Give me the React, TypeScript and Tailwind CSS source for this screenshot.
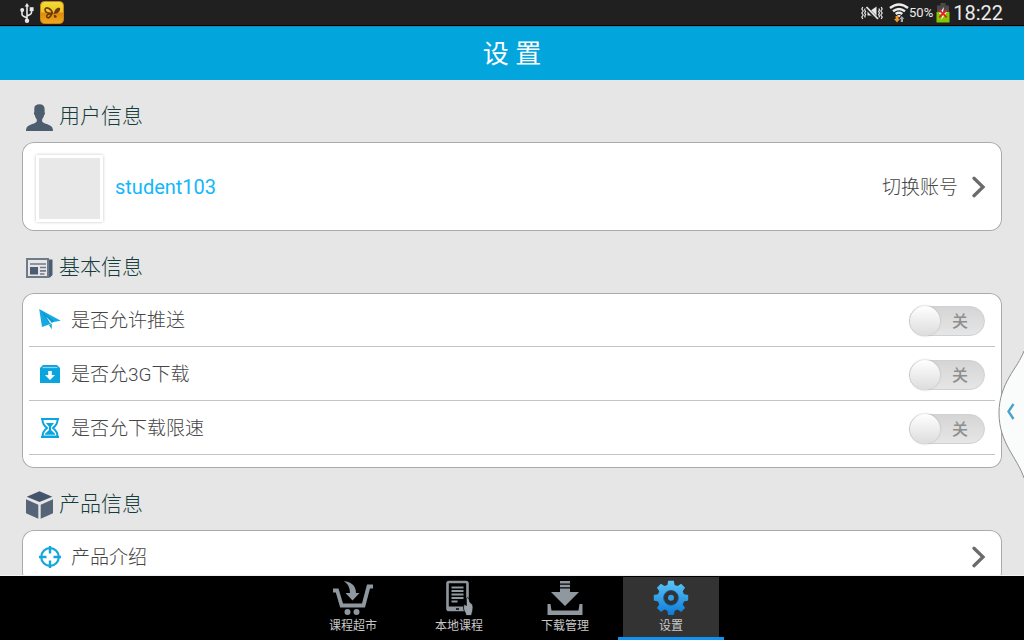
import { useState } from "react";
import type { ReactNode } from "react";

function UsbIcon() {
  return (
    <svg width="14" height="20" viewBox="0 0 14 20" fill="#e8e8e8" stroke="#e8e8e8" strokeWidth="1.6">
      <path d="M7 3v14M2 8v3.5q0 1 1.5 1.7L7 15M11.500 7v2.500q0 1.300-1.500 2L7 13" fill="none" />
      <path d="M7 0l2.300 3.500H4.700z" stroke="none" />
      <circle cx="7" cy="17.700" r="2.200" stroke="none" />
      <circle cx="2.200" cy="7" r="2" stroke="none" />
      <path d="M9.700 4.200h3.900v3.900H9.700z" stroke="none" />
    </svg>
  );
}

function ButterflyBadge() {
  return (
    <svg width="24" height="23" viewBox="0 0 24 23">
      <defs>
        <linearGradient id="gold" x1="0" y1="0" x2="0" y2="1">
          <stop offset="0" stopColor="#f2df35" />
          <stop offset="0.45" stopColor="#eec32a" />
          <stop offset="0.55" stopColor="#e08a10" />
          <stop offset="1" stopColor="#f0a91c" />
        </linearGradient>
      </defs>
      <rect x="0.500" y="0.500" width="23" height="22" rx="4" fill="url(#gold)" stroke="#c98512" />
      <g fill="none" stroke="#6b3a08" strokeWidth="1.600">
        <path d="M12.500 12.500C11.500 7.500 5.500 5 5 8.500c0 3 4 4 7.500 4zM11 13c-3.500-.5-5 1.500-4 3.300 1.500 1.500 4-.8 4.500-3.300" />
      </g>
      <path d="M14 13c0-4 3.200-7 6-6 .8 3-2.500 6-6 6zM13.800 14.200c2-.6 3.300.5 2.700 2.300-1.500 1-2.900-.3-2.700-2.300z" fill="#6b3a08" />
    </svg>
  );
}

function MuteIcon() {
  return (
    <svg width="22" height="16" viewBox="0 0 22 16" fill="none" stroke="#e8e8e8" strokeWidth="1.200">
      <path d="M1.800 2l-1 2 1.400 2-1.400 2 1.400 2-1.400 2 1 2M4.300 3.500l-.6 1.500.9 1.500-.9 1.500.9 1.500-.9 1.500.6 1.500M20.200 2l1 2-1.400 2 1.400 2-1.400 2 1.400 2-1 2M17.900 3.500l.6 1.500-.9 1.500.9 1.500-.9 1.500.9 1.500-.6 1.500" />
      <path d="M6.500 5.500h3.300L15.500 1.500v13l-5.700-4H6.500z" fill="#e8e8e8" stroke="none" />
      <path d="M5.500 3l11 11.500" stroke="#202020" strokeWidth="3.600" />
      <path d="M5.500 2l11.500 12" strokeWidth="1.800" />
    </svg>
  );
}

function WifiIcon() {
  return (
    <svg width="20" height="20" viewBox="0 0 20 20" fill="none">
      <path d="M1 5q9-7 18 0M4 8.200q6-4.600 12 0M6.700 11q3.300-2.400 6.600 0" stroke="#ededed" strokeWidth="2.400" />
      <path d="M8 12.500q2-1.200 4 0l-2 2z" fill="#ededed" />
      <path d="M6.600 13h2.800v3H11l-3 3.500L5 16h1.600z" fill="#f2952b" />
      <path d="M11.800 19v-3h-1.300l2.300-3 2.500 3H14v3z" fill="#a8a8a8" />
    </svg>
  );
}

function BatteryIcon() {
  return (
    <svg width="14" height="20" viewBox="0 0 14 20">
      <path d="M4.500 0h5v2.500H13V9H1V2.500h3.500z" fill="#4a4a4a" />
      <path d="M0.500 9h13v10.500H0.500z" fill="#83c606" />
      <path d="M8 4l-5 7h4l-2 6 6-8H7z" fill="#fff" />
      <path d="M3.300 7l7.400 7.400M10.700 7l-7.400 7.400" stroke="#e51f1f" strokeWidth="1.800" />
    </svg>
  );
}

function PersonIcon() {
  return (
    <svg width="27" height="27" viewBox="0 0 27 27" fill="#4d5d70">
      <path d="M8.300 4.200C8.500 1.400 10.500 0.300 13.500 0.300c3.300 0 5.100 1.600 5.100 4.700v3.200c.7.200.5 2-.5 3.100-.4 2.200-1.500 3.200-2 4.200v2c1.100 1.800 4 2.200 6.900 3.400 3 1.200 4 3 4 6H0c0-3 .9-4.800 4-6 2.900-1.200 5.700-1.600 6.800-3.400v-2c-.7-1-1.600-2-2-4.200-1-1.100-1.200-2.900-.5-3.100z" />
    </svg>
  );
}

function NewsIcon() {
  return (
    <svg width="27" height="20" viewBox="0 0 27 20">
      <path d="M22 1.500h4.500v15.500L24 19.500h-3z" fill="#4d5d70" />
      <rect x="1" y="1" width="21" height="18" fill="#e6e6e6" stroke="#6f7a8a" strokeWidth="2" />
      <path d="M4 9h8v7.500H4z" fill="#4d5d70" />
      <path d="M4 6h16M14 9.500h6M14 12.800h6M14 16h4.500" stroke="#6f7a8a" strokeWidth="1.700" />
    </svg>
  );
}

function CubeIcon() {
  return (
    <svg width="27" height="28" viewBox="0 0 27 28">
      <path d="M13.500 0.300L26.300 5.700 13.500 11 0.700 5.700z" fill="#44546a" />
      <path d="M0 8.300l12.300 5.400V27.700L0 22.300z" fill="#566477" />
      <path d="M27 8.300l-12.300 5.400V27.700L27 22.300z" fill="#566477" />
    </svg>
  );
}

function SendIcon() {
  return (
    <svg width="22" height="22" viewBox="0 0 22 22">
      <path d="M0.200 0L21.800 11.700l-7.300 1.300-4.500 2.500L3 18z" fill="#14a9e0" />
      <path d="M2.500 2.500L10.300 14.500l4.700-2.200z" fill="#0896cd" />
      <path d="M7 7.500l4 6.700 1.800-.7z" fill="#d9f1fa" />
      <path d="M9.800 16l3-1.200v5.400z" fill="#14a9e0" />
    </svg>
  );
}

function DownloadBoxIcon() {
  return (
    <svg width="22" height="22" viewBox="0 0 22 22">
      <path d="M1 5L4 2h14l3 3v15H1z" fill="#0aa5dd" />
      <path d="M3.500 4.500h15" stroke="#8fd5ef" strokeWidth="1.200" />
      <path d="M9.200 8h3.600v4H16l-5 5-5-5h3.200z" fill="#fff" />
    </svg>
  );
}

function HourglassIcon() {
  return (
    <svg width="22" height="22" viewBox="0 0 22 22">
      <path d="M2 2h18M2 20h18" stroke="#0aa5dd" strokeWidth="2.200" />
      <path d="M3.500 3c0 4 2 6 4.500 8-2.500 2-4.500 4.500-4.500 8.500h15c0-4-2-6.500-4.500-8.500 2.500-2 4.500-4 4.500-8" fill="none" stroke="#0aa5dd" strokeWidth="2" />
      <path d="M7 6h8l-3 3.800v3.200l4 3.700v1H6v-1l4-3.700V9.800z" fill="#0aa5dd" />
    </svg>
  );
}

function TargetIcon() {
  return (
    <svg width="22" height="22" viewBox="0 0 22 22" fill="none" stroke="#14a7de">
      <circle cx="11" cy="11" r="8.800" strokeWidth="2.200" />
      <path d="M11 0v7.500M11 14.500V22M0 11h7.500M14.500 11H22" strokeWidth="2.400" />
    </svg>
  );
}

function ChevronIcon() {
  return (
    <svg width="14" height="22" viewBox="0 0 14 22" fill="none" stroke="#6b6b6b" strokeWidth="3.300" strokeLinecap="round">
      <path d="M2 2.300l9 8.700-9 8.700" />
    </svg>
  );
}

function CartIcon() {
  return (
    <svg width="42" height="36" viewBox="0 0 42 36" fill="#8f979f">
      <path d="M1 8.500h5.500l4.500 15h19L35 4.500h6v4h-3L33 27.500H8.200L3.800 12.500H1z" />
      <circle cx="15.500" cy="32" r="3" />
      <circle cx="24.500" cy="32" r="3" />
      <path d="M11.500 1C20 2 24 6 24 13h3.500L20.500 20.500 13.500 13H18C18 8 16 3.500 11.500 1z" />
    </svg>
  );
}

function TabletIcon() {
  return (
    <svg width="30" height="36" viewBox="0 0 30 36">
      <rect x="3.500" y="2" width="20" height="28" rx="1.500" fill="none" stroke="#8f979f" strokeWidth="2.600" />
      <path d="M3 26.500h19v4.500H3z" fill="#8f979f" />
      <path d="M12 29h3" stroke="#000" strokeWidth="1.500" />
      <path d="M7.500 7.500h12M7.500 11h12M7.500 14.500h12M7.500 18h12M7.500 21.500h6" stroke="#8f979f" strokeWidth="1.800" />
      <path d="M22.300 18.500c1.200-1.500 2.400-1 2.700.5l1 3.500c2 1 3 2.500 3 5 0 3-1 5-1.500 8H22c0-3-2.500-4.500-2.500-7.500l.5-4 2.500 1.500z" fill="#9aa1a8" stroke="#000" strokeWidth="0.800" />
    </svg>
  );
}

function DownloadIcon() {
  return (
    <svg width="36" height="36" viewBox="0 0 36 36" fill="#8f979f">
      <path d="M13 1h10v2.500H13zM13 4.700h10v2.500H13zM13 8.400h10V12h9L18 26 4 12h9z" />
      <path d="M0.500 24h3l1 6.500h27l1-6.500h3v11H0.500z" />
    </svg>
  );
}

function GearIcon() {
  return (
    <svg width="36" height="36" viewBox="0 0 36 36">
      <defs>
        <linearGradient id="gear" x1="0" y1="0" x2="0" y2="1">
          <stop offset="0" stopColor="#5cc4f6" />
          <stop offset="1" stopColor="#0c7bd8" />
        </linearGradient>
      </defs>
      <path
        fill="url(#gear)"
        fillRule="evenodd"
        d="M15.200 0.800h5.600l.8 4.100 3 1.200 3.500-2.400 4 4-2.400 3.500 1.300 3 4.200.8v5.600l-4.200.8-1.300 3 2.400 3.500-4 4-3.500-2.400-3 1.300-.8 4.100h-5.600l-.8-4.100-3-1.300-3.500 2.400-4-4 2.400-3.500-1.300-3-4.200-.8V15l4.200-.8 1.300-3-2.400-3.500 4-4 3.500 2.400 3-1.200zM18 10.700a7.100 7.100 0 1 0 0 14.200 7.100 7.100 0 1 0 0-14.200z"
      />
      <circle cx="18" cy="17.800" r="7.300" fill="none" stroke="#0f3f66" strokeWidth="0.800" />
      <circle cx="18" cy="17.800" r="3" fill="#2f9fe8" />
    </svg>
  );
}

function StatusBar() {
  return (
    <div className="flex h-[26px] shrink-0 items-center justify-between border-b border-black bg-[#202020] pr-[21px] pl-5 text-[#ececec]">
      <div className="flex items-center gap-1.5">
        <UsbIcon />
        <ButterflyBadge />
      </div>
      <div className="flex items-center">
        <MuteIcon />
        <span className="pl-1.5">
          <WifiIcon />
        </span>
        <span className="pt-px text-[13px]">50%</span>
        <span className="px-[3px] pt-px">
          <BatteryIcon />
        </span>
        <time className="text-xl">18:22</time>
      </div>
    </div>
  );
}

function Section({ icon, title, children }: { icon: ReactNode; title: string; children: ReactNode }) {
  return (
    <section className="pt-3">
      <h2 className="flex h-[50px] items-center gap-1.5 pl-1 text-[21px] font-light text-[#143c3c]">
        {icon}
        {title}
      </h2>
      <div className="rounded-xl bg-white px-[7px] ring-1 ring-[#ababab] ring-inset">{children}</div>
    </section>
  );
}

function ToggleRow({ icon, label }: { icon: ReactNode; label: string }) {
  const [on, setOn] = useState(false);
  return (
    <label className="flex h-[54px] cursor-pointer items-center gap-2.5 border-b border-[#c4c4c4] px-2.5">
      {icon}
      <span className="flex-1 pt-1">{label}</span>
      <input type="checkbox" className="peer sr-only" checked={on} onChange={(e) => setOn(e.target.checked)} />
      <span
        aria-hidden="true"
        className="mt-0.5 flex h-[30px] w-[76px] items-center justify-between rounded-full border border-[#cfd1d5] bg-linear-to-b from-[#d5d5d5] to-[#e6e6e6] pr-4 text-base font-medium text-[#8e8e8e] peer-checked:flex-row-reverse peer-checked:pr-0 peer-checked:pl-4 peer-focus-visible:outline-2"
      >
        <span className="size-[30px] rounded-full bg-linear-to-b from-white to-[#dcdcdc] shadow-[0_0_2px_#a8a8a8]" />
        <span className="pt-0.5">{on ? "开" : "关"}</span>
      </span>
    </label>
  );
}

function NavItem({ icon, label, active = false }: { icon: ReactNode; label: string; active?: boolean }) {
  return (
    <button
      type="button"
      aria-current={active ? "page" : undefined}
      className={
        active
          ? "flex w-[106px] flex-col items-center border-b-3 border-[#1193f5] pt-px"
          : "flex w-[106px] flex-col items-center border-b-3 border-transparent pt-px"
      }
    >
      <span
        className={
          active
            ? "flex w-24 flex-1 flex-col items-center gap-0.5 bg-[#333333] pt-[3px]"
            : "flex w-24 flex-1 flex-col items-center gap-0.5 pt-[3px]"
        }
      >
        {icon}
        <span className="text-xs leading-4">{label}</span>
      </span>
    </button>
  );
}

export default function App() {
  return (
    <div className="flex h-screen flex-col overflow-hidden bg-[#e6e6e6] font-[Roboto,'Noto_Sans_CJK_SC',sans-serif]">
      <StatusBar />
      <header className="flex h-[54px] shrink-0 items-center justify-center border-t border-[#128abb] bg-[#03a5dd] pt-0.5">
        <h1 className="text-[26px] text-white">设 置</h1>
      </header>

      <main className="relative min-h-0 flex-1 overflow-hidden border-b border-[#edf3f0] px-[22px] text-[19px] font-light text-[#454545]">
        <Section icon={<PersonIcon />} title="用户信息">
          <div className="flex h-[89px] items-center gap-3 pr-[9px] pl-[7px]">
            <div className="mt-1 size-[67px] border-3 border-white bg-[#e8e8e8] shadow-[0_0_3px_#c4c4c4]" />
            <span className="flex-1 text-xl font-normal text-[#12b7fb]">student103</span>
            <button type="button" className="flex items-center gap-3.5">
              <span className="pt-1">切换账号</span>
              <ChevronIcon />
            </button>
          </div>
        </Section>

        <Section icon={<NewsIcon />} title="基本信息">
          <div className="pb-[13px]">
            <ToggleRow icon={<SendIcon />} label="是否允许推送" />
            <ToggleRow icon={<DownloadBoxIcon />} label="是否允3G下载" />
            <ToggleRow icon={<HourglassIcon />} label="是否允下载限速" />
          </div>
        </Section>

        <Section icon={<CubeIcon />} title="产品信息">
          <a href="#intro" className="flex h-[54px] items-center gap-2.5 border-b border-[#c4c4c4] pr-[9px] pl-2.5">
            <TargetIcon />
            <span className="flex-1 pt-1">产品介绍</span>
            <ChevronIcon />
          </a>
        </Section>

        <button type="button" aria-label="展开" className="absolute top-[264px] right-0">
          <svg width="26" height="136" viewBox="0 0 26 136" fill="none">
            <path d="M26 7C20 24 1 39 1 69s18 44 25 65z" fill="#f9fcfb" />
            <path d="M26 7C20 24 1 39 1 69s18 44 25 65" stroke="#8d8d8d" />
            <path d="M15.500 60l-5 7.500 5 7.500" stroke="#4aa3cd" strokeWidth="2.400" />
          </svg>
        </button>
      </main>

      <nav className="flex h-16 shrink-0 justify-center bg-black text-[#c9c9c9]">
        <NavItem icon={<CartIcon />} label="课程超市" />
        <NavItem icon={<TabletIcon />} label="本地课程" />
        <NavItem icon={<DownloadIcon />} label="下载管理" />
        <NavItem icon={<GearIcon />} label="设置" active />
      </nav>
    </div>
  );
}
